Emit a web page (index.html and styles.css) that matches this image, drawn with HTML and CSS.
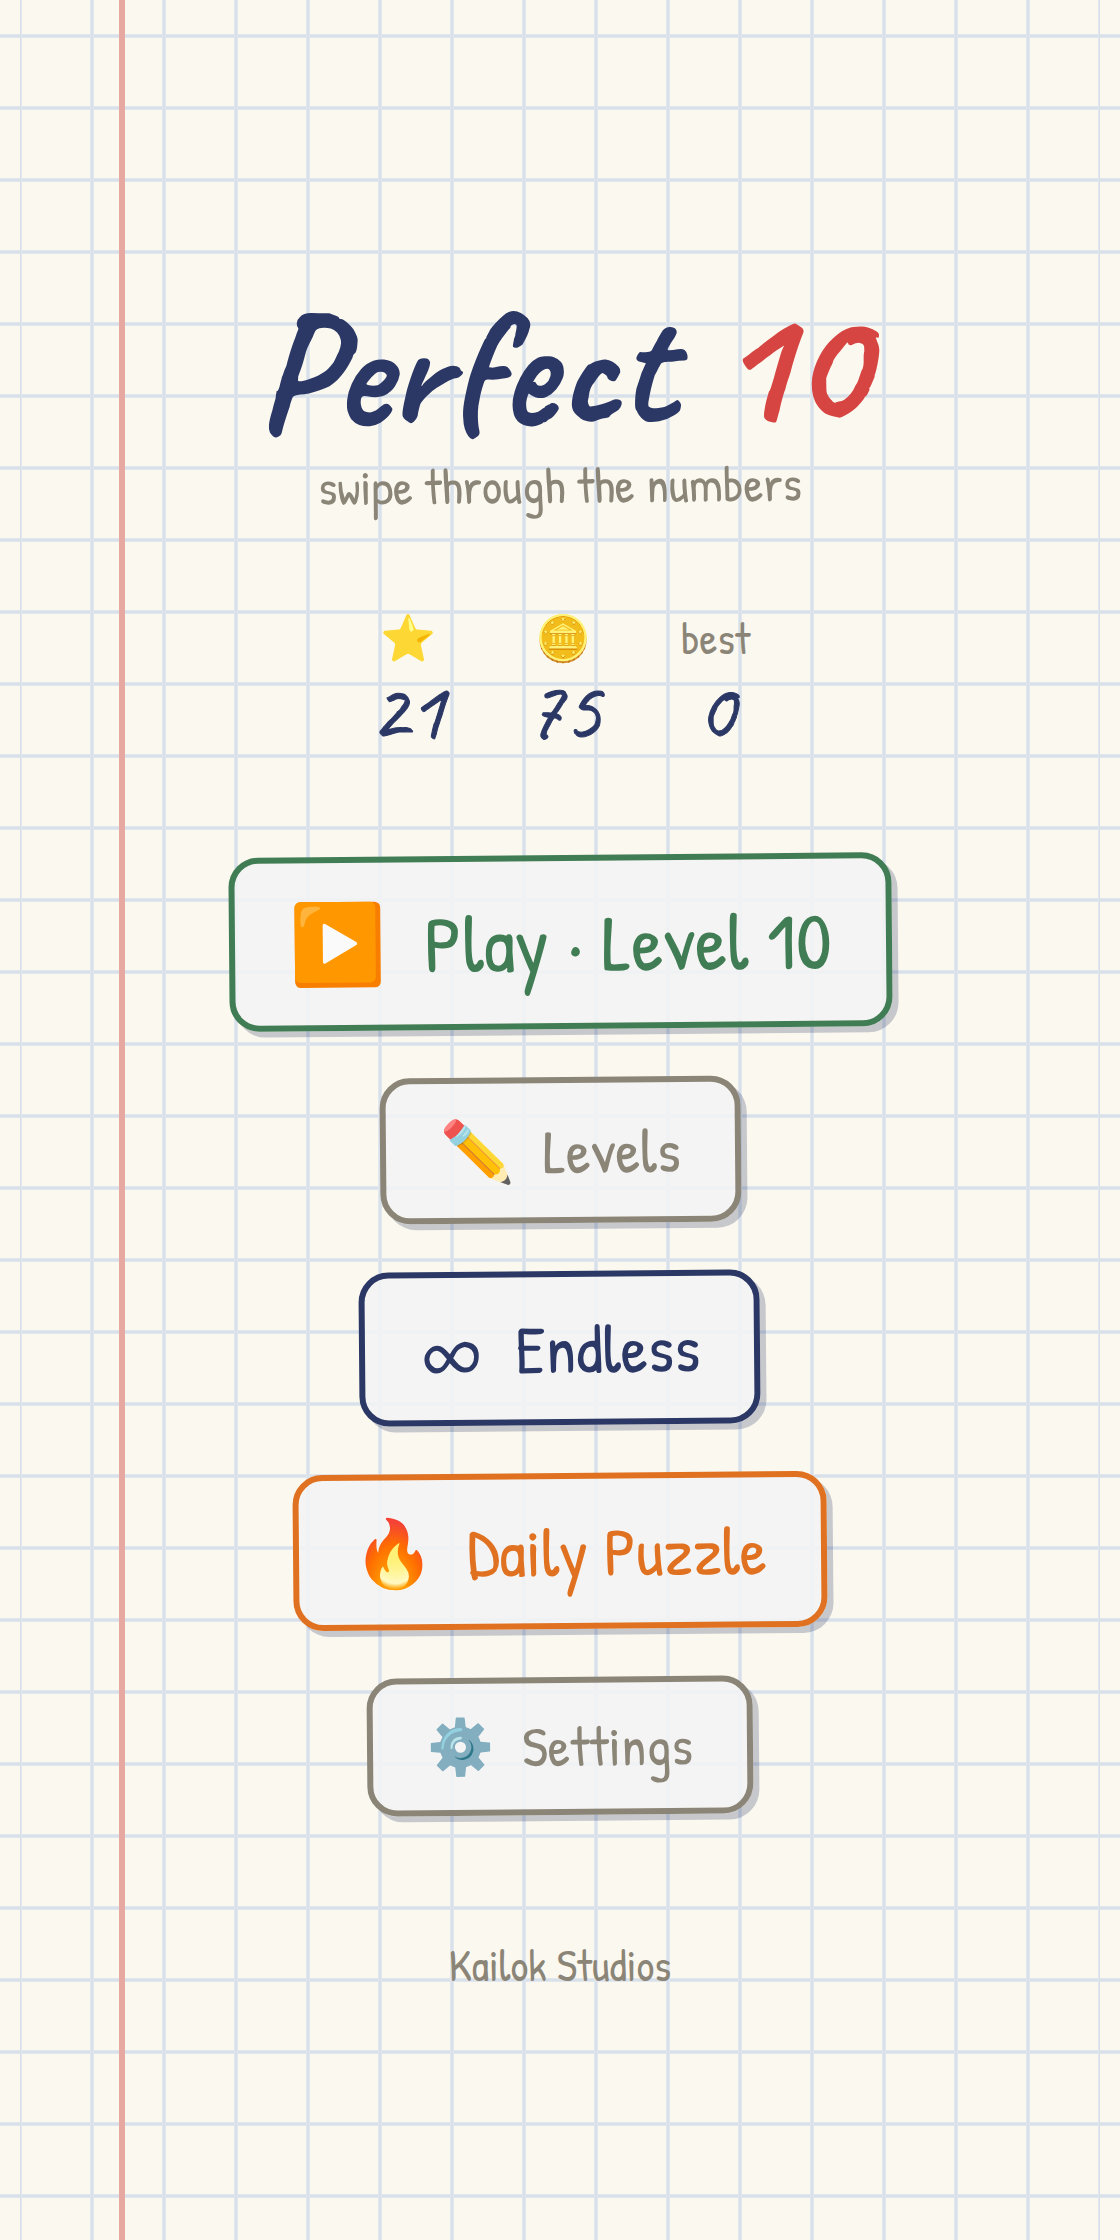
FILE: index.html
```html
<!DOCTYPE html>
<html lang="en">
<head>
<meta charset="utf-8">
<meta name="viewport" content="width=device-width, initial-scale=1">
<title>Perfect 10</title>
<link rel="stylesheet" href="styles.css">
</head>
<body>
<div class="margin-rule"></div>
<main class="page">
  <h1 class="title">Perfect <span class="title-ten">10</span></h1>
  <p class="tagline">swipe through the numbers</p>

  <section class="stats" aria-label="Progress">
    <div class="stat">
      <span class="stat-label" role="img" aria-label="Stars">⭐</span>
      <span class="stat-value">21</span>
    </div>
    <div class="stat">
      <span class="stat-label" role="img" aria-label="Coins">🪙</span>
      <span class="stat-value">75</span>
    </div>
    <div class="stat">
      <span class="stat-label">best</span>
      <span class="stat-value">0</span>
    </div>
  </section>

  <nav class="menu" aria-label="Main menu">
    <button class="btn btn-play" type="button"><span class="icon" aria-hidden="true">▶️</span><span>Play · Level 10</span></button>
    <button class="btn btn-levels" type="button"><span class="icon" aria-hidden="true">✏️</span><span>Levels</span></button>
    <button class="btn btn-endless" type="button"><span class="icon" aria-hidden="true">∞</span><span>Endless</span></button>
    <button class="btn btn-daily" type="button"><span class="icon" aria-hidden="true">🔥</span><span>Daily Puzzle</span></button>
    <button class="btn btn-settings" type="button"><span class="icon" aria-hidden="true">⚙️</span><span>Settings</span></button>
  </nav>

  <footer class="credit">Kailok Studios</footer>
</main>
</body>
</html>
```
FILE: styles.css
```css
:root {
  --paper: #fbf8ef;
  --rule: #d8e0ea;
  --rule-edge: #e2e7ed;
  --navy: #2b3865;
  --red: #d64541;
  --green: #417d54;
  --orange: #df7120;
  --pencil: #8b8578;
  --script: "Caveat", cursive;
  --hand: "Patrick Hand", sans-serif;
}

* {
  box-sizing: border-box;
}

body {
  margin: 0;
  min-height: 100vh;
  color: var(--pencil);
  font-family: var(--hand);
  background: var(--paper) repeating-linear-gradient(to bottom,
    transparent 0 34px, var(--rule-edge) 34px 35px, var(--rule) 35px 37px,
    var(--rule-edge) 37px 38px, transparent 38px 72px);
}

.margin-rule {
  position: absolute;
  top: 0;
  bottom: 0;
  left: 119px;
  width: 6px;
  min-height: 100vh;
  background: #e6a8a1;
}

.page {
  display: flex;
  flex-direction: column;
  align-items: center;
  min-height: 100vh;
  margin: 0 20px;
  padding: 278px 0 200px;
  background: repeating-linear-gradient(to right,
    var(--rule) 0 1px, var(--rule-edge) 1px 2px, transparent 2px 70px,
    var(--rule-edge) 70px 71px, var(--rule) 71px 72px);
}

.title {
  margin: 0;
  color: var(--navy);
  font: 700 168px/180px var(--script);
  transform: rotate(-1deg);
}

.title-ten {
  color: var(--red);
}

.tagline {
  margin: 0;
  font-size: 50px;
  line-height: 54px;
  transform: rotate(-0.5deg);
}

.stats {
  display: flex;
  gap: 80px;
  margin-top: 98px;
}

.stat {
  display: flex;
  flex-direction: column;
  align-items: center;
}

.stat-label {
  font-size: 45px;
  line-height: 56px;
}

.stat-value {
  color: var(--navy);
  font: 400 84px/88px var(--script);
  -webkit-text-stroke: 1px currentColor;
}

.menu {
  display: flex;
  flex-direction: column;
  align-items: center;
  gap: 48px;
  margin-top: 101px;
}

.btn {
  display: flex;
  align-items: center;
  padding: 32px 54px;
  border: 6px solid currentColor;
  border-radius: 30px;
  background: rgb(243 243 245 / 85%);
  background-clip: padding-box;
  box-shadow: 6px 6px 0 rgb(43 56 101 / 25%);
  color: var(--pencil);
  font-family: var(--hand);
  white-space: nowrap;
  cursor: pointer;
  transform: rotate(-0.5deg);
}

.btn-play {
  gap: 38px;
  color: var(--green);
  font-size: 80px;
  line-height: 98px;
}

.btn-play .icon {
  font-size: 78px;
}

.btn-levels {
  gap: 28px;
  font-size: 62px;
  line-height: 70px;
}

.btn-levels .icon {
  font-size: 60px;
}

.btn-endless {
  gap: 32px;
  color: var(--navy);
  font-size: 68px;
  line-height: 78px;
}

.btn-endless .icon {
  font-size: 66px;
}

.btn-daily {
  gap: 32px;
  color: var(--orange);
  font-size: 68px;
  line-height: 80px;
}

.btn-daily .icon {
  font-size: 66px;
}

.btn-settings {
  gap: 28px;
  font-size: 56px;
  line-height: 62px;
}

.btn-settings .icon {
  font-size: 54px;
}

.credit {
  margin-top: 120px;
  font-size: 44px;
  line-height: 60px;
}
```
